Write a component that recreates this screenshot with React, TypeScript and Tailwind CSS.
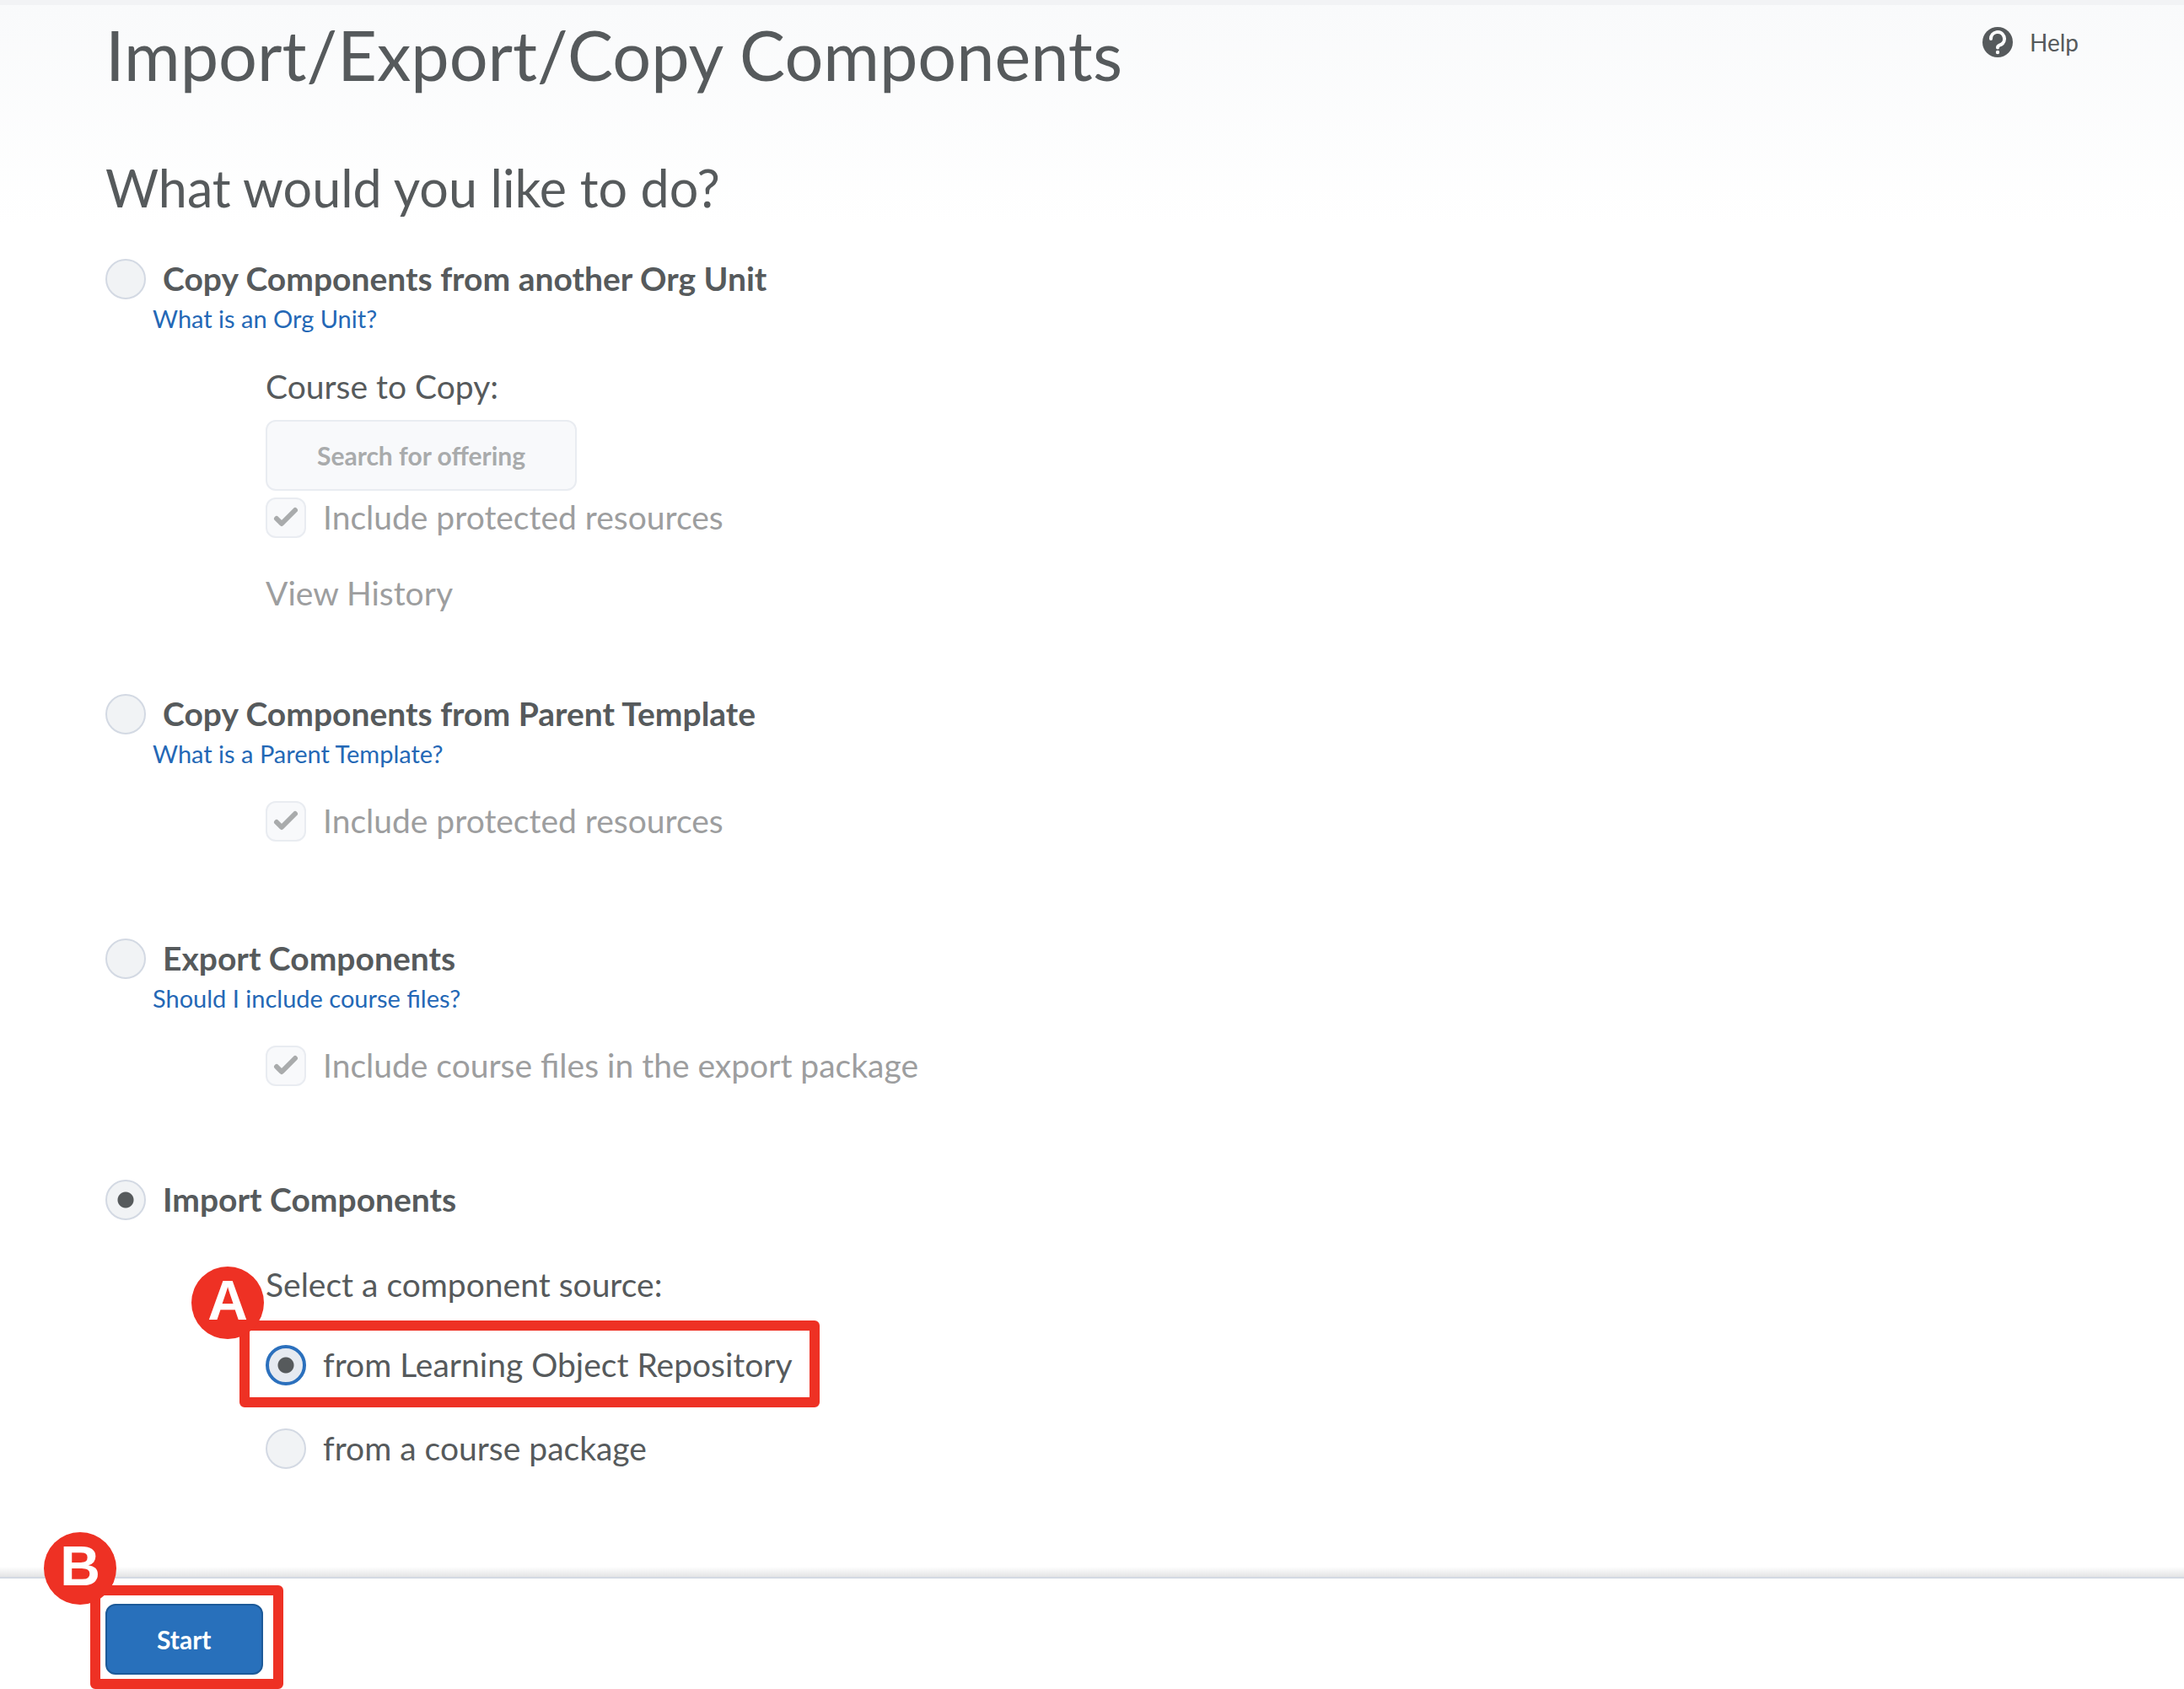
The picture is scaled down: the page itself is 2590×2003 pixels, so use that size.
import type { ReactNode } from "react";

const radioBase =
  "size-12 shrink-0 appearance-none rounded-full border-2 border-[#d3d9e3] bg-[#f1f3f5] checked:bg-[radial-gradient(circle,#565a5c_9px,transparent_10px)]";

function Radio({ id, name, label, bold, checked, focused }: { id: string; name: string; label: string; bold?: boolean; checked?: boolean; focused?: boolean }) {
  return (
    <div className="flex h-12 items-center gap-5">
      <input
        type="radio"
        id={id}
        name={name}
        defaultChecked={checked}
        className={
          focused
            ? "size-12 shrink-0 appearance-none rounded-full border-4 border-[#2b70bd] bg-[#e6eaf0] checked:bg-[radial-gradient(circle,#565a5c_9px,transparent_10px)]"
            : radioBase
        }
      />
      <label htmlFor={id} className={bold ? "pb-0.5 font-bold" : "pb-0.5"}>
        {label}
      </label>
    </div>
  );
}

function DisabledCheck({ id, label }: { id: string; label: string }) {
  return (
    <div className="flex h-12 items-center gap-5">
      <div className="relative size-12 shrink-0">
        <input
          type="checkbox"
          id={id}
          defaultChecked
          disabled
          className="block size-12 appearance-none rounded-xl border-2 border-[#e9ecf1] bg-[#f8f9fb]"
        />
        <svg viewBox="0 0 48 48" className="pointer-events-none absolute inset-0 size-12" aria-hidden="true">
          <path d="M13 25 L19 31 L35 15" fill="none" stroke="#a9abac" strokeWidth="6" strokeLinecap="round" strokeLinejoin="round" />
        </svg>
      </div>
      <label htmlFor={id} className="pb-0.5 text-[#9d9e9f]">
        {label}
      </label>
    </div>
  );
}

function HelpLink({ children }: { children: ReactNode }) {
  return (
    <a href="#help" className="mt-1.5 ml-14 self-start text-[29px] leading-[34px] text-[#2468b6]">
      {children}
    </a>
  );
}

function Badge({ children, className }: { children: ReactNode; className: string }) {
  return (
    <span
      className={
        "absolute flex size-[86px] items-center justify-center rounded-full bg-[#ee3124] pb-1.5 font-['Liberation_Sans',sans-serif] text-[66px] leading-none font-bold text-white " +
        className
      }
    >
      {children}
    </span>
  );
}

export default function App() {
  return (
    <div className="flex min-h-screen flex-col bg-white font-[Lato,sans-serif] text-[39px] leading-[48px] text-[#565a5c]">
      <div className="h-1.5 bg-[#f2f3f5]" />
      <main className="flex-1 bg-[linear-gradient(to_bottom,#f9fafb,#ffffff_260px)] px-[125px] pt-[11px] pb-28">
        <header className="flex items-start justify-between">
          <h1 className="text-[81px] leading-[96px]">Import/Export/Copy Components</h1>
          <a href="#help" className="mt-[15px] flex items-center gap-5 text-[28px] leading-9">
            <svg viewBox="0 0 36 36" className="size-9" aria-hidden="true">
              <circle cx="18" cy="18" r="18" fill="#565a5c" />
              <path d="M10 14A8 8 0 1 1 22 20.9C19.5 22 18 22 18 24.5" fill="none" stroke="#fff" strokeWidth="4" strokeLinecap="round" />
              <circle cx="18" cy="30" r="2.2" fill="#fff" />
            </svg>
            Help
          </a>
        </header>
        <form id="components">
          <h2 className="mt-[74px] text-[61px] leading-[72px]">What would you like to do?</h2>

          <section className="mt-12 flex flex-col">
            <Radio id="copy-org" name="action" label="Copy Components from another Org Unit" bold />
            <HelpLink>What is an Org Unit?</HelpLink>
            <div className="mt-[39px] ml-[190px] flex flex-col items-start">
              <p>Course to Copy:</p>
              <button
                type="button"
                disabled
                className="mt-4 mb-2 h-[84px] rounded-xl border-2 border-[#e9ecf1] bg-[#f8f9fb] px-[59px] text-[30px] font-bold text-[#a9abac]"
              >
                Search for offering
              </button>
              <DisabledCheck id="org-protected" label="Include protected resources" />
              <p className="mt-[41px] text-[#9d9e9f]">View History</p>
            </div>
          </section>

          <section className="mt-24 flex flex-col">
            <Radio id="copy-parent" name="action" label="Copy Components from Parent Template" bold />
            <HelpLink>What is a Parent Template?</HelpLink>
            <div className="mt-[39px] ml-[190px]">
              <DisabledCheck id="parent-protected" label="Include protected resources" />
            </div>
          </section>

          <section className="mt-[115px] flex flex-col">
            <Radio id="export" name="action" label="Export Components" bold />
            <HelpLink>Should I include course files?</HelpLink>
            <div className="mt-[39px] ml-[190px]">
              <DisabledCheck id="export-files" label="Include course files in the export package" />
            </div>
          </section>

          <section className="mt-[111px] flex flex-col">
            <Radio id="import" name="action" label="Import Components" bold checked />
            <fieldset className="mt-[52px] ml-[190px] flex flex-col items-start">
              <legend>Select a component source:</legend>
              <div className="relative mt-12">
                <Radio id="from-lor" name="source" label="from Learning Object Repository" checked focused />
                <div className="pointer-events-none absolute -top-[29px] -right-[32px] -bottom-[26px] -left-[31px] rounded-md border-12 border-[#ee3124]" />
                <Badge className="-top-[93px] -left-[88px]">A</Badge>
              </div>
              <div className="mt-[51px]">
                <Radio id="from-package" name="source" label="from a course package" />
              </div>
            </fieldset>
          </section>
        </form>
      </main>
      <div className="h-3 bg-linear-to-b from-white to-[#e3e4e5]" />
      <footer className="border-t-2 border-[#d3d9e3] bg-white px-[125px] pt-[30px] pb-[17px]">
        <div className="relative inline-block align-top">
          <button
            type="submit"
            form="components"
            className="block h-[84px] rounded-xl border-2 border-[#1c5a99] bg-[#2870bb] px-[59px] text-[30px] font-bold text-white"
          >
            Start
          </button>
          <div className="pointer-events-none absolute -top-[22px] -right-6 -bottom-[17px] -left-[18px] rounded-md border-12 border-[#ee3124]" />
          <Badge className="-top-[85px] -left-[73px]">B</Badge>
        </div>
      </footer>
    </div>
  );
}
